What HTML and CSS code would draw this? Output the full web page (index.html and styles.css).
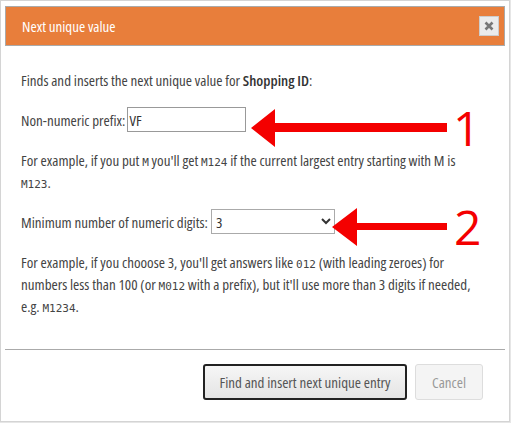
FILE: index.html
```html
<!DOCTYPE html>
<html lang="en">
<head>
    <meta charset="UTF-8">
    <title>Next unique value</title>
    <link rel="stylesheet" href="styles.css">
</head>
<body>
    <div class="dialog">
        <!-- Title bar -->
        <div class="titlebar">
            <span class="title">Next unique value</span>
            <button class="close-btn" title="Close">
                <svg width="10" height="10" viewBox="0 0 10 10"><path d="M1.5 1.5 L8.5 8.5 M8.5 1.5 L1.5 8.5" stroke="#777" stroke-width="2.6"/></svg>
            </button>
        </div>

        <div class="content">
            <p class="intro">Finds and inserts the next unique value for <strong>Shopping ID</strong>:</p>

            <div class="field">
                <label for="prefix">Non-numeric prefix:</label>
                <input type="text" id="prefix" class="prefix-input" value="VF">
            </div>

            <p>For example, if you put <code>M</code> you'll get <code>M124</code> if the current largest entry starting with M is <code>M123</code>.</p>

            <div class="field">
                <label for="digits">Minimum number of numeric digits:</label>
                <select id="digits" class="digits-select">
                    <option>3</option>
                </select>
            </div>

            <p>For example, if you chooose 3, you'll get answers like <code>012</code> (with leading zeroes) for numbers less than 100 (or <code>M012</code> with a prefix), but it'll use more than 3 digits if needed, e.g. <code>M1234</code>.</p>
        </div>

        <div class="buttons">
            <button class="btn btn-primary">Find and insert next unique entry</button>
            <button class="btn btn-cancel">Cancel</button>
        </div>

        <!-- Annotation arrows -->
        <div class="marker marker-1">
            <svg width="200" height="40" viewBox="0 0 200 40"><path d="M0 20 L24 1 L24 15 L196 15 L196 24 L24 24 L24 39 Z" fill="#f40000"/></svg>
            <span class="marker-num">1</span>
        </div>
        <div class="marker marker-2">
            <svg width="120" height="40" viewBox="0 0 120 40"><path d="M0 20 L25 1 L25 16 L115 16 L115 23 L25 23 L25 39 Z" fill="#f40000"/></svg>
            <span class="marker-num">2</span>
        </div>
    </div>
</body>
</html>
```

FILE: styles.css
```css
html, body {
    margin: 0;
    padding: 0;
    background-color: #e6e6e6;
}
body {
    font-family: "Open Sans", sans-serif;
    font-stretch: 75%;
    font-size: 15px;
    color: #444;
}
.dialog {
    position: relative;
    width: 510px;
    height: 422px;
    padding: 5px 4px 0 4px;
    background-color: #fff;
    border: 1px solid #d4d4d4;
    box-sizing: border-box;
}
.titlebar {
    height: 40px;
    background-color: #e87e3b;
    border: 1px solid #aaa;
    box-sizing: border-box;
    display: flex;
    align-items: center;
    justify-content: space-between;
    padding: 0 5px 0 16px;
}
.title {
    color: #fff;
    font-size: 15px;
    font-weight: 500;
}
.close-btn {
    width: 20px;
    height: 20px;
    padding: 0;
    border: 1px solid #ccc;
    background-color: #ebebeb;
    display: flex;
    align-items: center;
    justify-content: center;
}
.content {
    padding: 23px 30px 0 16px;
    height: 304px;
    box-sizing: border-box;
    border-bottom: 1px solid #aaa;
    line-height: 22px;
}
.content p {
    margin: 17px 0 0 0;
}
.content p.intro {
    margin-top: 0;
}
strong {
    font-weight: 600;
    color: #333;
}
.field {
    margin-top: 16px;
    display: flex;
    align-items: center;
    height: 25px;
}
.prefix-input {
    margin-left: 2px;
    width: 119px;
    height: 25px;
    box-sizing: border-box;
    border: 1px solid #999;
    padding: 0 1px;
    font: inherit;
    color: #333;
    outline: none;
}
.digits-select {
    margin-left: 3px;
    width: 124px;
    height: 25px;
    box-sizing: border-box;
    border: 1px solid #aaa;
    background: #fff;
    font: inherit;
    color: #333;
}
code {
    font-family: "DejaVu Sans Mono", monospace;
    font-size: 11px;
    line-height: 1;
}
.buttons {
    display: flex;
    justify-content: flex-end;
    gap: 8px;
    padding: 14px 22px 0 0;
}
.btn {
    height: 36px;
    font: inherit;
    color: #555;
    background: linear-gradient(#f6f6f6, #e4e4e4);
    border-radius: 3px;
    padding: 0;
    white-space: nowrap;
}
.btn-primary {
    border: 2px solid #222;
    width: 204px;
}
.btn-cancel {
    border: 1px solid #ddd;
    background: #f4f4f4;
    color: #999;
    width: 68px;
}
.marker {
    position: absolute;
    display: flex;
    align-items: center;
}
.marker svg {
    flex: none;
}
.marker-num {
    font-family: "Open Sans", sans-serif;
    font-stretch: 100%;
    font-size: 48px;
    color: #f40000;
    line-height: 1;
    margin-left: 2px;
}
.marker-1 {
    left: 250px;
    top: 103px;
}
.marker-2 {
    left: 331px;
    top: 202px;
}
```
